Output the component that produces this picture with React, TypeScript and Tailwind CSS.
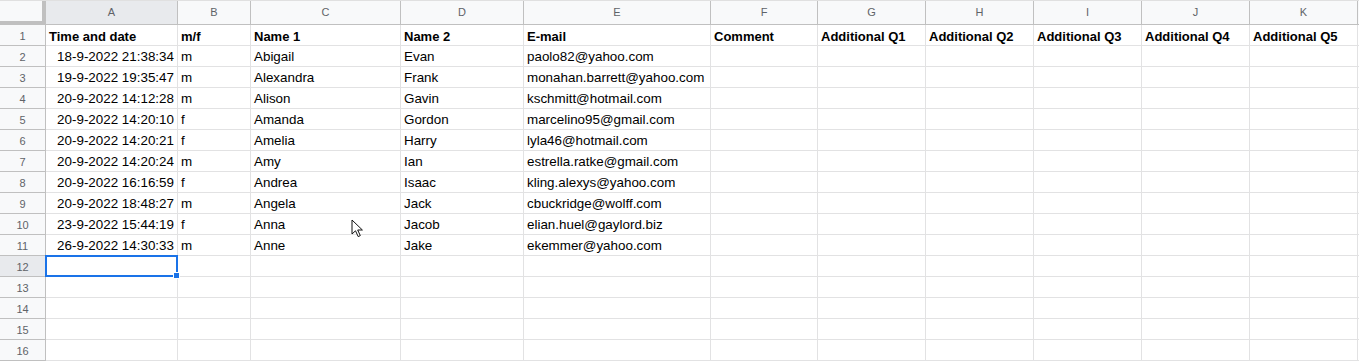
import React from 'react';

const cols = [
	{ key: 'A', w: 'w-[132px]' },
	{ key: 'B', w: 'w-[73px]' },
	{ key: 'C', w: 'w-[150px]' },
	{ key: 'D', w: 'w-[123px]' },
	{ key: 'E', w: 'w-[187px]' },
	{ key: 'F', w: 'w-[107px]' },
	{ key: 'G', w: 'w-[108px]' },
	{ key: 'H', w: 'w-[108px]' },
	{ key: 'I', w: 'w-[108px]' },
	{ key: 'J', w: 'w-[108px]' },
	{ key: 'K', w: 'w-[108px]' },
];

const headings = [
	'Time and date',
	'm/f',
	'Name 1',
	'Name 2',
	'E-mail',
	'Comment',
	'Additional Q1',
	'Additional Q2',
	'Additional Q3',
	'Additional Q4',
	'Additional Q5',
];

const rows = [
	['18-9-2022 21:38:34', 'm', 'Abigail', 'Evan', 'paolo82@yahoo.com'],
	['19-9-2022 19:35:47', 'm', 'Alexandra', 'Frank', 'monahan.barrett@yahoo.com'],
	['20-9-2022 14:12:28', 'm', 'Alison', 'Gavin', 'kschmitt@hotmail.com'],
	['20-9-2022 14:20:10', 'f', 'Amanda', 'Gordon', 'marcelino95@gmail.com'],
	['20-9-2022 14:20:21', 'f', 'Amelia', 'Harry', 'lyla46@hotmail.com'],
	['20-9-2022 14:20:24', 'm', 'Amy', 'Ian', 'estrella.ratke@gmail.com'],
	['20-9-2022 16:16:59', 'f', 'Andrea', 'Isaac', 'kling.alexys@yahoo.com'],
	['20-9-2022 18:48:27', 'm', 'Angela', 'Jack', 'cbuckridge@wolff.com'],
	['23-9-2022 15:44:19', 'f', 'Anna', 'Jacob', 'elian.huel@gaylord.biz'],
	['26-9-2022 14:30:33', 'm', 'Anne', 'Jake', 'ekemmer@yahoo.com'],
];

const SELECTED_ROW = 12;

const Cursor = () => (
	<svg
		className="absolute left-[351px] top-[219px] pointer-events-none"
		width="13"
		height="19"
		viewBox="0 0 13 19"
	>
		<path
			d="M1 1 L1 15 L4.5 11.8 L7.2 17.6 L9.3 16.6 L6.7 11 L11.4 11 Z"
			fill="white"
			stroke="#111"
			strokeWidth="1"
			strokeLinejoin="round"
		/>
	</svg>
);

const App = () => {
	const allRows: string[][] = [headings, ...rows];
	while (allRows.length < 16) allRows.push([]);

	return (
		<div className="relative w-[1359px] h-[362px] overflow-hidden bg-white font-['Liberation_Sans',Arial,sans-serif] text-black">
			{/* column letters */}
			<div className="flex h-[25px] bg-[#f8f9fa] border-t border-[#e0e0e0]">
				<div className="w-[46px] shrink-0 border-r-4 border-b-4 border-[#c0c0c0]" />
				{cols.map((c) => (
					<div
						key={c.key}
						className={`${c.w} shrink-0 flex items-center justify-center border-r border-b border-[#c0c0c0] text-[11px] text-[#5f6368] ${
							c.key === 'A' ? 'bg-[#e8eaed]' : ''
						}`}
					>
						{c.key}
					</div>
				))}
				<div className="flex-1 border-b border-[#c0c0c0]" />
			</div>

			{allRows.map((row, i) => {
				const n = i + 1;
				return (
					<div key={n} className="flex h-[21px]">
						<div
							className={`w-[46px] shrink-0 flex items-center justify-center pt-[3px] border-r border-b border-[#c0c0c0] text-[11px] text-[#5f6368] ${
								n === SELECTED_ROW ? 'bg-[#e8eaed]' : 'bg-[#f8f9fa]'
							}`}
						>
							{n}
						</div>
						{cols.map((c, j) => {
							const v = row[j] ?? '';
							const isDate = i > 0 && j === 0;
							return (
								<div
									key={c.key}
									className={`${c.w} shrink-0 relative flex items-center pt-[3px] px-[3px] border-r border-b border-[#e2e2e3] whitespace-nowrap overflow-hidden ${
										i === 0 ? 'font-bold text-[13px]' : 'text-[13.4px]'
									} ${isDate ? 'justify-end' : ''}`}
								>
									{v}
								</div>
							);
						})}
						<div className="flex-1 border-b border-[#e2e2e3]" />
					</div>
				);
			})}

			{/* selected cell A12 */}
			<div className="absolute left-[45px] top-[255px] w-[133px] h-[22px] border-2 border-[#1a73e8] pointer-events-none" />
			<div className="absolute left-[173px] top-[272px] w-[7px] h-[7px] bg-[#1a73e8] border border-white pointer-events-none" />

			<Cursor />
		</div>
	);
};

export default App;
